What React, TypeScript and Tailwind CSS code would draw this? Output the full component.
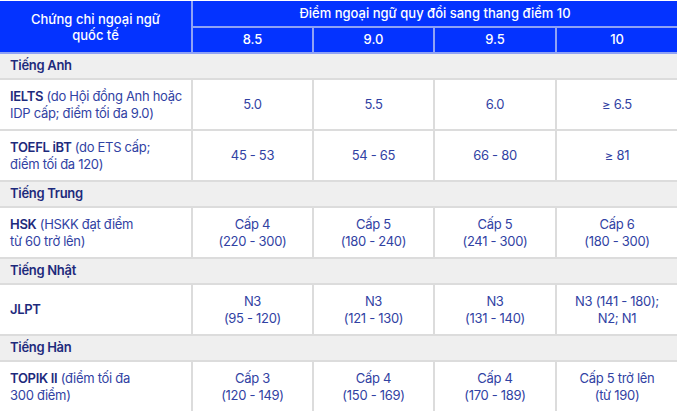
// Bảng quy đổi điểm chứng chỉ ngoại ngữ sang thang điểm 10.

type Row = { name: string; note: string[]; values: string[][] }
type Section = { title: string; rows: Row[] }

const sections: Section[] = [
  {
    title: "Tiếng Anh",
    rows: [
      {
        name: "IELTS",
        note: [" (do Hội đồng Anh hoặc", "IDP cấp; điểm tối đa 9.0)"],
        values: [["5.0"], ["5.5"], ["6.0"], ["≥ 6.5"]],
      },
      {
        name: "TOEFL iBT",
        note: [" (do ETS cấp;", "điểm tối đa 120)"],
        values: [["45 - 53"], ["54 - 65"], ["66 - 80"], ["≥ 81"]],
      },
    ],
  },
  {
    title: "Tiếng Trung",
    rows: [
      {
        name: "HSK",
        note: [" (HSKK đạt điểm", "từ 60 trở lên)"],
        values: [
          ["Cấp 4", "(220 - 300)"],
          ["Cấp 5", "(180 - 240)"],
          ["Cấp 5", "(241 - 300)"],
          ["Cấp 6", "(180 - 300)"],
        ],
      },
    ],
  },
  {
    title: "Tiếng Nhật",
    rows: [
      {
        name: "JLPT",
        note: [],
        values: [
          ["N3", "(95 - 120)"],
          ["N3", "(121 - 130)"],
          ["N3", "(131 - 140)"],
          ["N3 (141 - 180);", "N2; N1"],
        ],
      },
    ],
  },
  {
    title: "Tiếng Hàn",
    rows: [
      {
        name: "TOPIK II",
        note: [" (điểm tối đa", "300 điểm)"],
        values: [
          ["Cấp 3", "(120 - 149)"],
          ["Cấp 4", "(150 - 169)"],
          ["Cấp 4", "(170 - 189)"],
          ["Cấp 5 trở lên", "(từ 190)"],
        ],
      },
    ],
  },
]

const scores = ["8.5", "9.0", "9.5", "10"]

export default function App() {
  return (
    <div className="h-[411px] w-[680px] bg-white pr-[3px] pt-px font-['Inter',sans-serif]">
      <table className="w-[677px] table-fixed border-collapse text-[13px]">
        <colgroup>
          <col className="w-[192px]" />
          <col className="w-[121px]" />
          <col className="w-[121px]" />
          <col className="w-[122px]" />
          <col className="w-[121px]" />
        </colgroup>
        <thead className="bg-[#0433ff] text-white">
          <tr className="h-[26px]">
            <th
              rowSpan={2}
              className="border-2 border-t-0 border-l-0 border-[#8fa2f5] px-4 leading-[16px] font-medium"
            >
              Chứng chỉ ngoại ngữ quốc tế
            </th>
            <th
              colSpan={4}
              className="border-2 border-t-0 border-r-0 border-[#8fa2f5] font-medium"
            >
              Điểm ngoại ngữ quy đổi sang thang điểm 10
            </th>
          </tr>
          <tr className="h-[26px]">
            {scores.map((s, i) => (
              <th
                key={s}
                className={`border-2 border-[#8fa2f5] font-medium ${i === 3 ? "border-r-0" : ""}`}
              >
                {s}
              </th>
            ))}
          </tr>
        </thead>
        <tbody className="tracking-[-0.3px] text-[#3142a3]">
          {sections.map((sec) => (
            <SectionRows key={sec.title} section={sec} />
          ))}
        </tbody>
      </table>
    </div>
  )
}

function SectionRows({ section }: { section: Section }) {
  return (
    <>
      <tr className="h-[26px] bg-[#efefef]">
        <td
          colSpan={5}
          className="border-2 border-x-0 border-[#dcdcdc] px-[10px] font-semibold text-[#1d2a7c]"
        >
          {section.title}
        </td>
      </tr>
      {section.rows.map((row) => (
        <tr key={row.name} className="h-[51px]">
          <td className="border-2 border-l-0 border-[#dcdcdc] pl-[10px] pr-0 leading-[17px]">
            <div className="whitespace-nowrap">
              <span className="font-semibold text-[#1d2a7c]">{row.name}</span>
              {row.note[0]}
            </div>
            {row.note[1] && <div className="whitespace-nowrap">{row.note[1]}</div>}
          </td>
          {row.values.map((lines, i) => (
            <td
              key={i}
              className={`border-2 border-[#dcdcdc] px-1 text-center leading-[17px] ${i === 3 ? "border-r-0" : ""}`}
            >
              {lines.map((l) => (
                <div key={l}>{l}</div>
              ))}
            </td>
          ))}
        </tr>
      ))}
    </>
  )
}
